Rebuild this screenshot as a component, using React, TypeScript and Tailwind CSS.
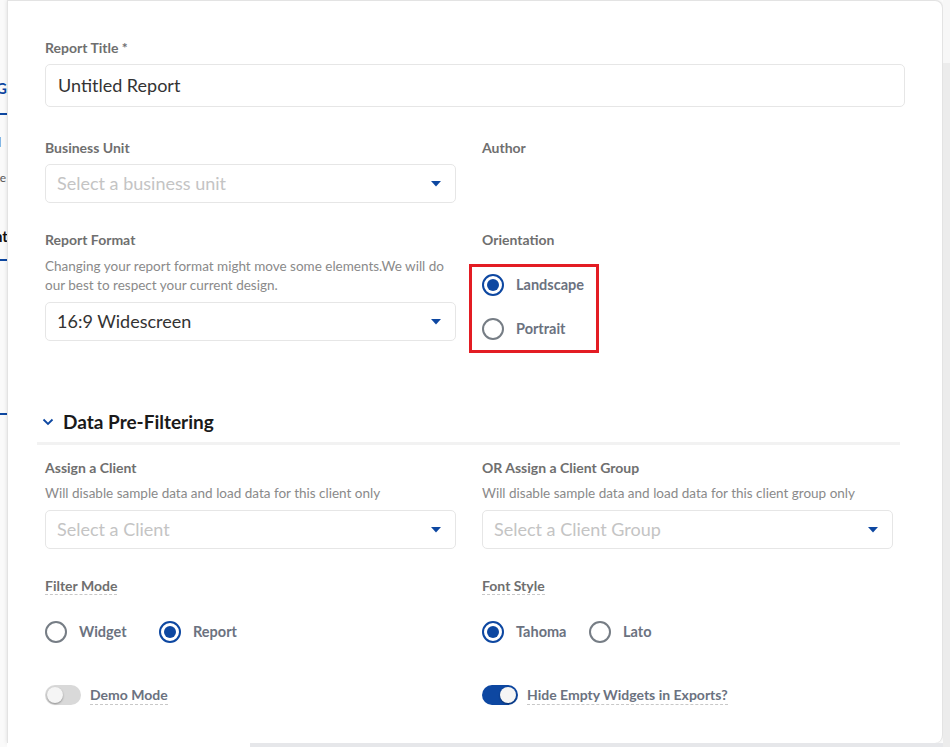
import React from "react";

const BLUE = "#0d47a1";

function Label({ children, dashed = false }: { children: React.ReactNode; dashed?: boolean }) {
  return (
    <div className="flex h-[18px]">
      <span
        className={
          "text-[14px] font-bold leading-[18px] text-[#6f6f6f] " +
          (dashed ? "border-b border-dashed border-[#c8c8c8]" : "")
        }
      >
        {children}
      </span>
    </div>
  );
}

function Help({ children, className = "" }: { children: React.ReactNode; className?: string }) {
  return <p className={"text-[13.5px] leading-[19px] text-[#8a8a8a] " + className}>{children}</p>;
}

function Select({ value, placeholder, className = "" }: { value?: string; placeholder?: string; className?: string }) {
  return (
    <div
      className={
        "flex h-[39px] items-center justify-between rounded-[5px] border border-[#e6e6e6] bg-white pl-[11px] pr-[14px] " +
        className
      }
    >
      <span className={"text-[18px] " + (value ? "text-[#333]" : "text-[#c4c4c4]")}>{value ?? placeholder}</span>
      <svg width="10" height="6" viewBox="0 0 10 6">
        <path d="M0 0 H10 L5 5.5 Z" fill={BLUE} />
      </svg>
    </div>
  );
}

function Radio({ checked, label, className = "" }: { checked: boolean; label: string; className?: string }) {
  return (
    <div className={"flex items-center gap-[12px] " + className}>
      <span
        className={
          "flex h-[22px] w-[22px] shrink-0 items-center justify-center rounded-full border-2 " +
          (checked ? "border-[#0d47a1]" : "border-[#767d85]")
        }
      >
        {checked && <span className="h-[12px] w-[12px] rounded-full bg-[#0d47a1]" />}
      </span>
      <span className="text-[14.5px] font-bold text-[#6b7280]">{label}</span>
    </div>
  );
}

function Toggle({ on, label }: { on: boolean; label: string }) {
  return (
    <div className="flex items-center gap-[9px]">
      <span
        className={
          "flex h-[20px] w-[36px] items-center rounded-full px-[2px] " +
          (on ? "justify-end bg-[#0d47a1]" : "justify-start bg-[#d9d9d9]")
        }
      >
        <span className="h-[16px] w-[16px] rounded-full bg-[#f5f5f5] shadow-[0_1px_2px_rgba(0,0,0,0.35)]" />
      </span>
      <span className="border-b border-dashed border-[#c8c8c8] text-[14px] font-bold leading-[18px] text-[#6b7280]">
        {label}
      </span>
    </div>
  );
}

export default function App() {
  return (
    <div
      className="flex h-[747px] w-[950px] overflow-hidden bg-white"
      style={{ fontFamily: "Lato, 'Noto Sans', sans-serif" }}
    >
      {/* background page fragment on the left */}
      <div className="flex w-[7px] shrink-0 flex-col overflow-hidden bg-[#fafafa] text-[15px] leading-[18px]">
        <div className="h-[79px]" />
        <div className="-ml-[4px] font-bold text-[#0d47a1]">G</div>
        <div className="mt-[16px] h-[2px] shrink-0 bg-[#0d47a1]" />
        <div className="-ml-[6px] mt-[18px] text-[13px] text-[#555]">d</div>
        <div className="-ml-[6px] mt-[18px] text-[12px] text-[#555]">ke</div>
        <div className="-ml-[6px] mt-[40px] font-bold text-[#111]">nt</div>
        <div className="mt-[14px] h-[2px] shrink-0 bg-[#0d47a1]" />
        <div className="mt-[152px] h-[2px] shrink-0 bg-[#0d47a1]" />
      </div>

      <div className="flex w-[936px] shrink-0 flex-col">
        <div className="h-[743px] rounded-br-[8px] rounded-tr-[8px] border-l border-r border-t border-[#e3e3e3] bg-white shadow-[0_0_4px_rgba(0,0,0,0.12)]">
          <div className="pl-[37px] pr-[37px] pt-[38px]">
            <Label>Report Title *</Label>
            <div className="mt-[7px] flex h-[43px] items-center rounded-[5px] border border-[#e6e6e6] pl-[12px] text-[18px] text-[#333]">
              Untitled Report
            </div>

            <div className="mt-[32px] grid grid-cols-[411px_411px] gap-x-[26px]">
              <div>
                <Label>Business Unit</Label>
                <Select className="mt-[7px]" placeholder="Select a business unit" />
              </div>
              <div>
                <Label>Author</Label>
              </div>
            </div>

            <div className="mt-[28px] grid grid-cols-[411px_411px] gap-x-[26px]">
              <div>
                <Label>Report Format</Label>
                <Help className="mt-[8px]">
                  Changing your report format might move some elements.We will do our best to respect your current
                  design.
                </Help>
                <Select className="mt-[7px]" value="16:9 Widescreen" />
              </div>
              <div>
                <Label>Orientation</Label>
                <div className="-ml-[13px] mt-[15px] flex h-[89px] w-[130px] flex-col gap-[22px] border-[3px] border-[#e31c23] pl-[10px] pt-[7px]">
                  <Radio checked label="Landscape" />
                  <Radio checked={false} label="Portrait" />
                </div>
              </div>
            </div>
          </div>

          <div className="ml-[29px] mr-[42px] mt-[57px]">
            <div className="flex h-[24px] items-center gap-[9px] pl-[5px]">
              <svg width="12" height="8" viewBox="0 0 12 8">
                <path d="M1.5 1.5 L6 6 L10.5 1.5" fill="none" stroke={BLUE} strokeWidth="1.8" />
              </svg>
              <span className="text-[19px] font-bold text-[#1a1a1a]">Data Pre-Filtering</span>
            </div>
            <div className="mt-[8px] h-[3px] bg-[#f2f2f2]" />
          </div>

          <div className="pl-[37px] pr-[37px] pt-[14px]">
            <div className="grid grid-cols-[411px_411px] gap-x-[26px]">
              <div>
                <Label>Assign a Client</Label>
                <Help className="mt-[7px]">Will disable sample data and load data for this client only</Help>
                <Select className="mt-[7px]" placeholder="Select a Client" />
              </div>
              <div>
                <Label>OR Assign a Client Group</Label>
                <Help className="mt-[7px]">Will disable sample data and load data for this client group only</Help>
                <Select className="mt-[7px]" placeholder="Select a Client Group" />
              </div>
            </div>

            <div className="mt-[28px] grid grid-cols-[411px_411px] gap-x-[26px]">
              <div>
                <Label dashed>Filter Mode</Label>
                <div className="mt-[26px] flex">
                  <Radio className="w-[114px]" checked={false} label="Widget" />
                  <Radio checked label="Report" />
                </div>
              </div>
              <div>
                <Label dashed>Font Style</Label>
                <div className="mt-[26px] flex">
                  <Radio className="w-[107px]" checked label="Tahoma" />
                  <Radio checked={false} label="Lato" />
                </div>
              </div>
            </div>

            <div className="mt-[42px] grid grid-cols-[411px_411px] gap-x-[26px]">
              <Toggle on={false} label="Demo Mode" />
              <Toggle on label="Hide Empty Widgets in Exports?" />
            </div>
          </div>
        </div>
        <div className="flex h-[4px]">
          <div className="w-[243px] bg-white" />
          <div className="flex-1 bg-[#e6e7ea]" />
        </div>
      </div>

      <div className="flex w-[7px] shrink-0 flex-col">
        <div className="h-[63px] bg-[#f7f7f7]" />
        <div className="flex-1 bg-[#ececec]" />
      </div>
    </div>
  );
}
